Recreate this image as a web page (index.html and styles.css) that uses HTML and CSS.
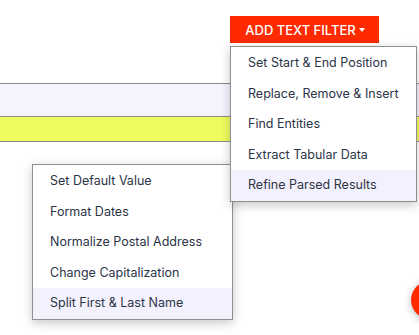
FILE: index.html
```html
<!DOCTYPE html>
<html>
<head>
<meta charset="utf-8">
<link rel="stylesheet" href="styles.css">
</head>
<body>
<div class="page">
  <div class="toolbar">
    <button class="add-btn">ADD TEXT FILTER <span class="caret"></span></button>
  </div>
  <div class="rows">
    <div class="row row-lav"></div>
    <div class="row row-yellow"></div>
  </div>
  <ul class="menu menu-main">
    <li>Set Start &amp; End Position</li>
    <li>Replace, Remove &amp; Insert</li>
    <li>Find Entities</li>
    <li>Extract Tabular Data</li>
    <li class="active">Refine Parsed Results</li>
  </ul>
  <ul class="menu menu-sub">
    <li>Set Default Value</li>
    <li>Format Dates</li>
    <li>Normalize Postal Address</li>
    <li>Change Capitalization</li>
    <li class="active">Split First &amp; Last Name</li>
  </ul>
  <div class="fab"></div>
</div>
</body>
</html>
```
FILE: styles.css
```css
html, body {
  margin: 0;
  padding: 0;
  background: #ffffff;
  font-family: Inter, "Noto Sans", sans-serif;
}
.page {
  position: relative;
  width: 419px;
  height: 335px;
  overflow: hidden;
}
.toolbar {
  display: flex;
  justify-content: flex-end;
  padding: 16px 40px 0 0;
  height: 83px;
  box-sizing: border-box;
}
.add-btn {
  width: 149px;
  height: 27px;
  border: 0;
  border-radius: 0;
  background: #ff2a00;
  color: #ffffff;
  font-family: Inter, "Noto Sans", sans-serif;
  font-size: 13px;
  font-weight: 500;
  letter-spacing: 0;
  padding: 0 0 0 1px;
  display: flex;
  align-items: center;
  justify-content: center;
  gap: 3px;
}
.caret {
  display: inline-block;
  width: 0;
  height: 0;
  border-left: 3.5px solid transparent;
  border-right: 3.5px solid transparent;
  border-top: 4px solid #ffffff;
  margin-top: 1px;
}
.rows {
  border-top: 1px solid #8c8c8c;
}
.row {
  border-bottom: 1px solid #8c8c8c;
}
.row-lav {
  height: 32px;
  background: #f5f3fe;
}
.row-yellow {
  height: 24px;
  background: #effc5d;
}
.menu {
  position: absolute;
  margin: 0;
  padding: 1px 0 0;
  list-style: none;
  background: #ffffff;
  border: 1px solid #8f8f8f;
  box-shadow: 0 3px 10px rgba(0, 0, 0, 0.22);
  font-size: 12.5px;
  color: #2b3446;
}
.menu li {
  height: 30.5px;
  line-height: 30.5px;
  padding-left: 17px;
  white-space: nowrap;
}
.menu li.active {
  background: #f3f1fd;
}
.menu-main {
  left: 230px;
  top: 46px;
  width: 185px;
  z-index: 3;
}
.menu-sub {
  left: 32px;
  top: 164px;
  width: 199px;
  z-index: 2;
}
.fab {
  position: absolute;
  left: 411px;
  top: 281px;
  width: 38px;
  height: 38px;
  border-radius: 50%;
  background: #ff2a00;
  box-shadow: 0 2px 8px rgba(0, 0, 0, 0.25);
}
```
